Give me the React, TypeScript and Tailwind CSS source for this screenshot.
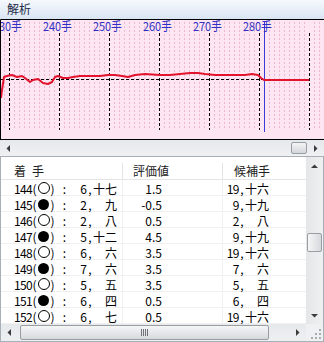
import React from "react";

type Row = { n: number; black: boolean; f: string; r: string; v: string; cf: string; cr: string };

const rows: Row[] = [
  { n: 144, black: false, f: "6", r: "十七", v: "1.5", cf: "19", cr: "十六" },
  { n: 145, black: true, f: "2", r: "九", v: "-0.5", cf: "9", cr: "十九" },
  { n: 146, black: false, f: "2", r: "八", v: "0.5", cf: "2", cr: "八" },
  { n: 147, black: true, f: "5", r: "十二", v: "4.5", cf: "9", cr: "十九" },
  { n: 148, black: false, f: "6", r: "六", v: "3.5", cf: "19", cr: "十六" },
  { n: 149, black: true, f: "7", r: "六", v: "3.5", cf: "7", cr: "六" },
  { n: 150, black: false, f: "5", r: "五", v: "3.5", cf: "5", cr: "五" },
  { n: 151, black: true, f: "6", r: "四", v: "0.5", cf: "6", cr: "四" },
  { n: 152, black: false, f: "6", r: "七", v: "0.5", cf: "19", cr: "十六" },
];

// eval graph, page coordinates (chart starts at y=19)
const redLine: [number, number][] = [
  [1, 98], [2, 90], [4, 77], [7, 76], [12, 75], [17, 77], [22, 76], [25, 78], [30, 82], [33, 80],
  [38, 79], [43, 83], [48, 84], [52, 82], [55, 77], [58, 76], [63, 78], [68, 78], [73, 77], [80, 76],
  [90, 76], [100, 76], [108, 75], [115, 75], [122, 76], [128, 77], [135, 75], [145, 74], [160, 75],
  [170, 75], [180, 74], [190, 73], [198, 73], [205, 74], [215, 75], [225, 75], [235, 75], [245, 75],
  [252, 74], [258, 75], [261, 78], [264, 80], [309, 80],
];

function Arrow({ dir }: { dir: "left" | "right" | "up" | "down" }) {
  if (dir === "left" || dir === "right") {
    return (
      <svg width={5} height={7} viewBox="0 0 5 7">
        <polygon points={dir === "left" ? "4,0 4,7 0.5,3.5" : "1,0 1,7 4.5,3.5"} fill="#3c3c3c" />
      </svg>
    );
  }
  return (
    <svg width={7} height={4} viewBox="0 0 7 4">
      <polygon points={dir === "up" ? "0,4 7,4 3.5,0.5" : "0,0 7,0 3.5,3.5"} fill="#3c3c3c" />
    </svg>
  );
}

function Chart() {
  const minor: number[] = [];
  for (let x = 4; x < 324; x += 5) if ((x - 9) % 50 !== 0) minor.push(x);
  const major = [9, 59, 109, 159, 209, 259, 309];
  const labels = [230, 240, 250, 260, 270, 280];
  return (
    <svg width={324} height={121} className="block shrink-0">
      <rect x={0} y={0} width={324} height={121} fill="#fde6f1" />
      {minor.map((x) => (
        <line key={x} x1={x + 0.5} x2={x + 0.5} y1={3} y2={111} stroke="#eab8d2" strokeDasharray="2 2" />
      ))}
      {major.map((x) => (
        <line key={x} x1={x + 0.5} x2={x + 0.5} y1={14} y2={111} stroke="#000" strokeDasharray="3 2" />
      ))}
      <line x1={1} x2={309} y1={60.5} y2={60.5} stroke="#000" strokeDasharray="3 2" />
      <line x1={264.5} x2={264.5} y1={3} y2={113} stroke="#3c3cdc" />
      <polyline
        points={redLine.map(([x, y]) => `${x},${y - 19}`).join(" ")}
        fill="none"
        stroke="#e3132d"
        strokeWidth={2}
        strokeLinejoin="round"
      />
      {labels.map((n, i) => (
        <text
          key={n}
          x={9 + i * 50 - 16}
          y={12}
          textLength={29}
          lengthAdjust="spacingAndGlyphs"
          fill="#2f2fc4"
          fontSize={12}
          fontFamily='"Noto Sans CJK JP", sans-serif'
        >
          {n}手
        </text>
      ))}
      <path d="M0.5 121 V0.5 H324 M0 120.5 H324" stroke="#000" fill="none" />
    </svg>
  );
}

function Stone({ black }: { black: boolean }) {
  return (
    <span className="flex w-[13px] items-center justify-center">
      {black ? (
        <span className="h-[11px] w-[11px] rounded-full bg-black" />
      ) : (
        <span className="h-[12px] w-[12px] rounded-full border border-black" />
      )}
    </span>
  );
}

export default function App() {
  return (
    <div className="flex h-[342px] w-[324px] flex-col overflow-hidden bg-white font-['Noto_Sans_CJK_JP',sans-serif] text-[12px] leading-[16px] text-black">
      {/* title bar */}
      <div className="h-[19px] shrink-0 bg-gradient-to-b from-[#f6f9fd] to-[#dae5f3] pl-[7px] pt-[1px] text-[#1e2d48]">
        解析
      </div>

      <Chart />

      {/* chart scrollbar */}
      <div className="flex h-[16px] shrink-0 bg-gradient-to-b from-[#e6e9ec] to-[#eef0f2]">
        <div className="flex w-[17px] items-center justify-center">
          <Arrow dir="left" />
        </div>
        <div className="flex-1" />
        <div className="my-[2px] w-[16px] rounded-[2px] border border-[#9a9ea4] bg-gradient-to-b from-[#f4f4f4] to-[#d3d6da]" />
        <div className="flex w-[17px] items-center justify-center">
          <Arrow dir="right" />
        </div>
      </div>

      {/* move list */}
      <div className="flex flex-1 border border-[#a9afb6]">
        <div className="flex w-[305px] flex-col">
          <div className="flex h-[23px] border-b border-[#e2e4e7] pt-[6px] text-[#222]">
            <div className="flex w-[122px] border-r border-[#e2e4e7] pl-[13px]">
              <span>着</span>
              <span className="ml-[6px]">手</span>
            </div>
            <div className="w-[100px] border-r border-[#e2e4e7] pl-[10px]">評価値</div>
            <div className="flex-1 pl-[11px]">候補手</div>
          </div>
          <div className="flex h-[144px] flex-col">
            {rows.map((r) => (
              <div key={r.n} className="flex h-[16px] border-b border-[#f0f0f0]">
                <div className="flex w-[122px] border-r border-[#f0f0f0] pl-[12px] pt-[1px]">
                  <span className="w-[19px] text-right tracking-[-0.7px]">{r.n}</span>
                  <span className="w-[5px] text-center">(</span>
                  <Stone black={r.black} />
                  <span className="w-[5px] text-center">)</span>
                  <span className="w-[7px]" />
                  <span className="w-[5px] text-center">:</span>
                  <span className="w-[8px]" />
                  <span className="w-[12px] text-right">{r.f}</span>
                  <span className="w-[6px] text-center">,</span>
                  <span className="w-[24px] text-right">{r.r}</span>
                </div>
                <div className="w-[100px] border-r border-[#f0f0f0] pt-[1px]">
                  <div className="w-[39px] text-right">{r.v}</div>
                </div>
                <div className="flex flex-1 pt-[1px]">
                  <span className="w-[16px] text-right tracking-[-0.5px]">{r.cf}</span>
                  <span className="w-[6px] text-center">,</span>
                  <span className="w-[24px] text-right">{r.cr}</span>
                </div>
              </div>
            ))}
          </div>
          {/* list h-scrollbar */}
          <div className="flex h-[17px] bg-gradient-to-b from-[#e6e9ec] to-[#eef0f2]">
            <div className="flex w-[17px] items-center justify-center">
              <Arrow dir="left" />
            </div>
            <div className="my-[1px] ml-[2px] flex w-[249px] items-center justify-center rounded-[2px] border border-[#9a9ea4] bg-gradient-to-b from-[#f6f6f6] to-[#d6d9dd]">
              <svg width={7} height={7} viewBox="0 0 7 7">
                <path d="M0.5 0 V7 M2.5 0 V7 M4.5 0 V7 M6.5 0 V7" stroke="#6f7378" />
              </svg>
            </div>
            <div className="flex-1" />
            <div className="flex w-[17px] items-center justify-center">
              <Arrow dir="right" />
            </div>
          </div>
        </div>

        {/* list v-scrollbar */}
        <div className="flex w-[17px] flex-col">
          <div className="flex flex-1 flex-col bg-gradient-to-r from-[#e4e6e8] to-[#eff0f2]">
            <div className="flex h-[17px] items-center justify-center">
              <Arrow dir="up" />
            </div>
            <div className="h-[59px]" />
            <div className="mx-[1px] h-[19px] rounded-[2px] border border-[#9a9ea4] bg-gradient-to-r from-[#f6f6f6] to-[#d6d9dd]" />
            <div className="flex-1" />
            <div className="flex h-[17px] items-center justify-center">
              <Arrow dir="down" />
            </div>
          </div>
          <div className="flex h-[17px] items-end justify-end bg-[#eef0f2] pb-[2px] pr-[2px]">
            <svg width={10} height={10} viewBox="0 0 10 10">
              {[
                [8, 0], [8, 4], [4, 4], [8, 8], [4, 8], [0, 8],
              ].map(([x, y]) => (
                <rect key={`${x}-${y}`} x={x} y={y} width={2} height={2} fill="#a9adb2" />
              ))}
            </svg>
          </div>
        </div>
      </div>
    </div>
  );
}
